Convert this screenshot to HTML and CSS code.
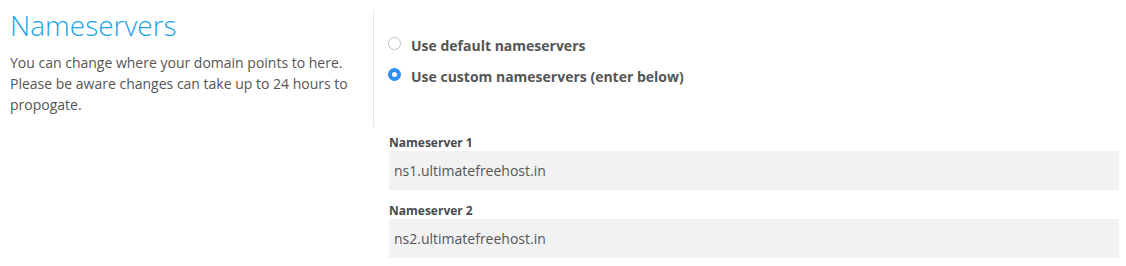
FILE: index.html
```html
<!DOCTYPE html>
<html lang="en">
<head>
  <meta charset="UTF-8" />
  <meta name="viewport" content="width=device-width, initial-scale=1.0"/>
  <title>Nameservers</title>
  <link rel="stylesheet" href="styles.css">
</head>
<body>
  <div class="row">
    <div class="intro">
      <h1>Nameservers</h1>
      <p>You can change where your domain points to here. Please be aware changes can take up to 24 hours to propogate.</p>
    </div>
    <div class="options">
      <label class="choice">
        <input type="radio" name="ns" value="default" />
        <span>Use default nameservers</span>
      </label>
      <label class="choice">
        <input type="radio" name="ns" value="custom" checked />
        <span>Use custom nameservers (enter below)</span>
      </label>
    </div>
  </div>

  <div class="fields">
    <label for="ns1">Nameserver 1</label>
    <input type="text" id="ns1" value="ns1.ultimatefreehost.in" />

    <label for="ns2">Nameserver 2</label>
    <input type="text" id="ns2" value="ns2.ultimatefreehost.in" />
  </div>
</body>
</html>
```

FILE: styles.css
```css
body {
  margin: 0;
  font-family: "Open Sans", Arial, sans-serif;
  color: #555;
  background-color: #fff;
}
.row {
  display: flex;
  padding-top: 10px;
}
.intro {
  width: 363px;
  padding: 0 0 12px 10px;
}
h1 {
  margin: 0 0 11px;
  font-size: 28px;
  font-weight: 300;
  line-height: 31px;
  color: #1ba3e6;
}
.intro p {
  margin: 0;
  font-size: 14px;
  line-height: 21px;
}
.options {
  flex: 1;
  border-left: 1px solid #e6e6e6;
  padding: 25px 0 0 14px;
  display: flex;
  flex-direction: column;
  gap: 10px;
}
.choice {
  display: flex;
  align-items: flex-start;
  gap: 10px;
  font-size: 14px;
  font-weight: bold;
  line-height: 21px;
  cursor: pointer;
}
.choice input {
  appearance: none;
  -webkit-appearance: none;
  width: 13px;
  height: 13px;
  margin: 2px 0 0;
  border: 1px solid #bdbdbd;
  border-radius: 50%;
  background-color: #fff;
  box-sizing: border-box;
  flex-shrink: 0;
}
.choice input:checked {
  border: 4.5px solid #2b8ff3;
  background-color: #fff;
}
.fields {
  margin: 7px 7px 0 389px;
}
.fields label {
  display: block;
  font-size: 12px;
  font-weight: bold;
  line-height: 17px;
  color: #4a4a4a;
}
.fields input {
  display: block;
  width: 100%;
  height: 39px;
  box-sizing: border-box;
  margin: 0 0 12px;
  padding: 0 5px;
  border: none;
  background-color: #f2f2f2;
  font-family: "Open Sans", Arial, sans-serif;
  font-size: 14px;
  color: #555;
}
```
